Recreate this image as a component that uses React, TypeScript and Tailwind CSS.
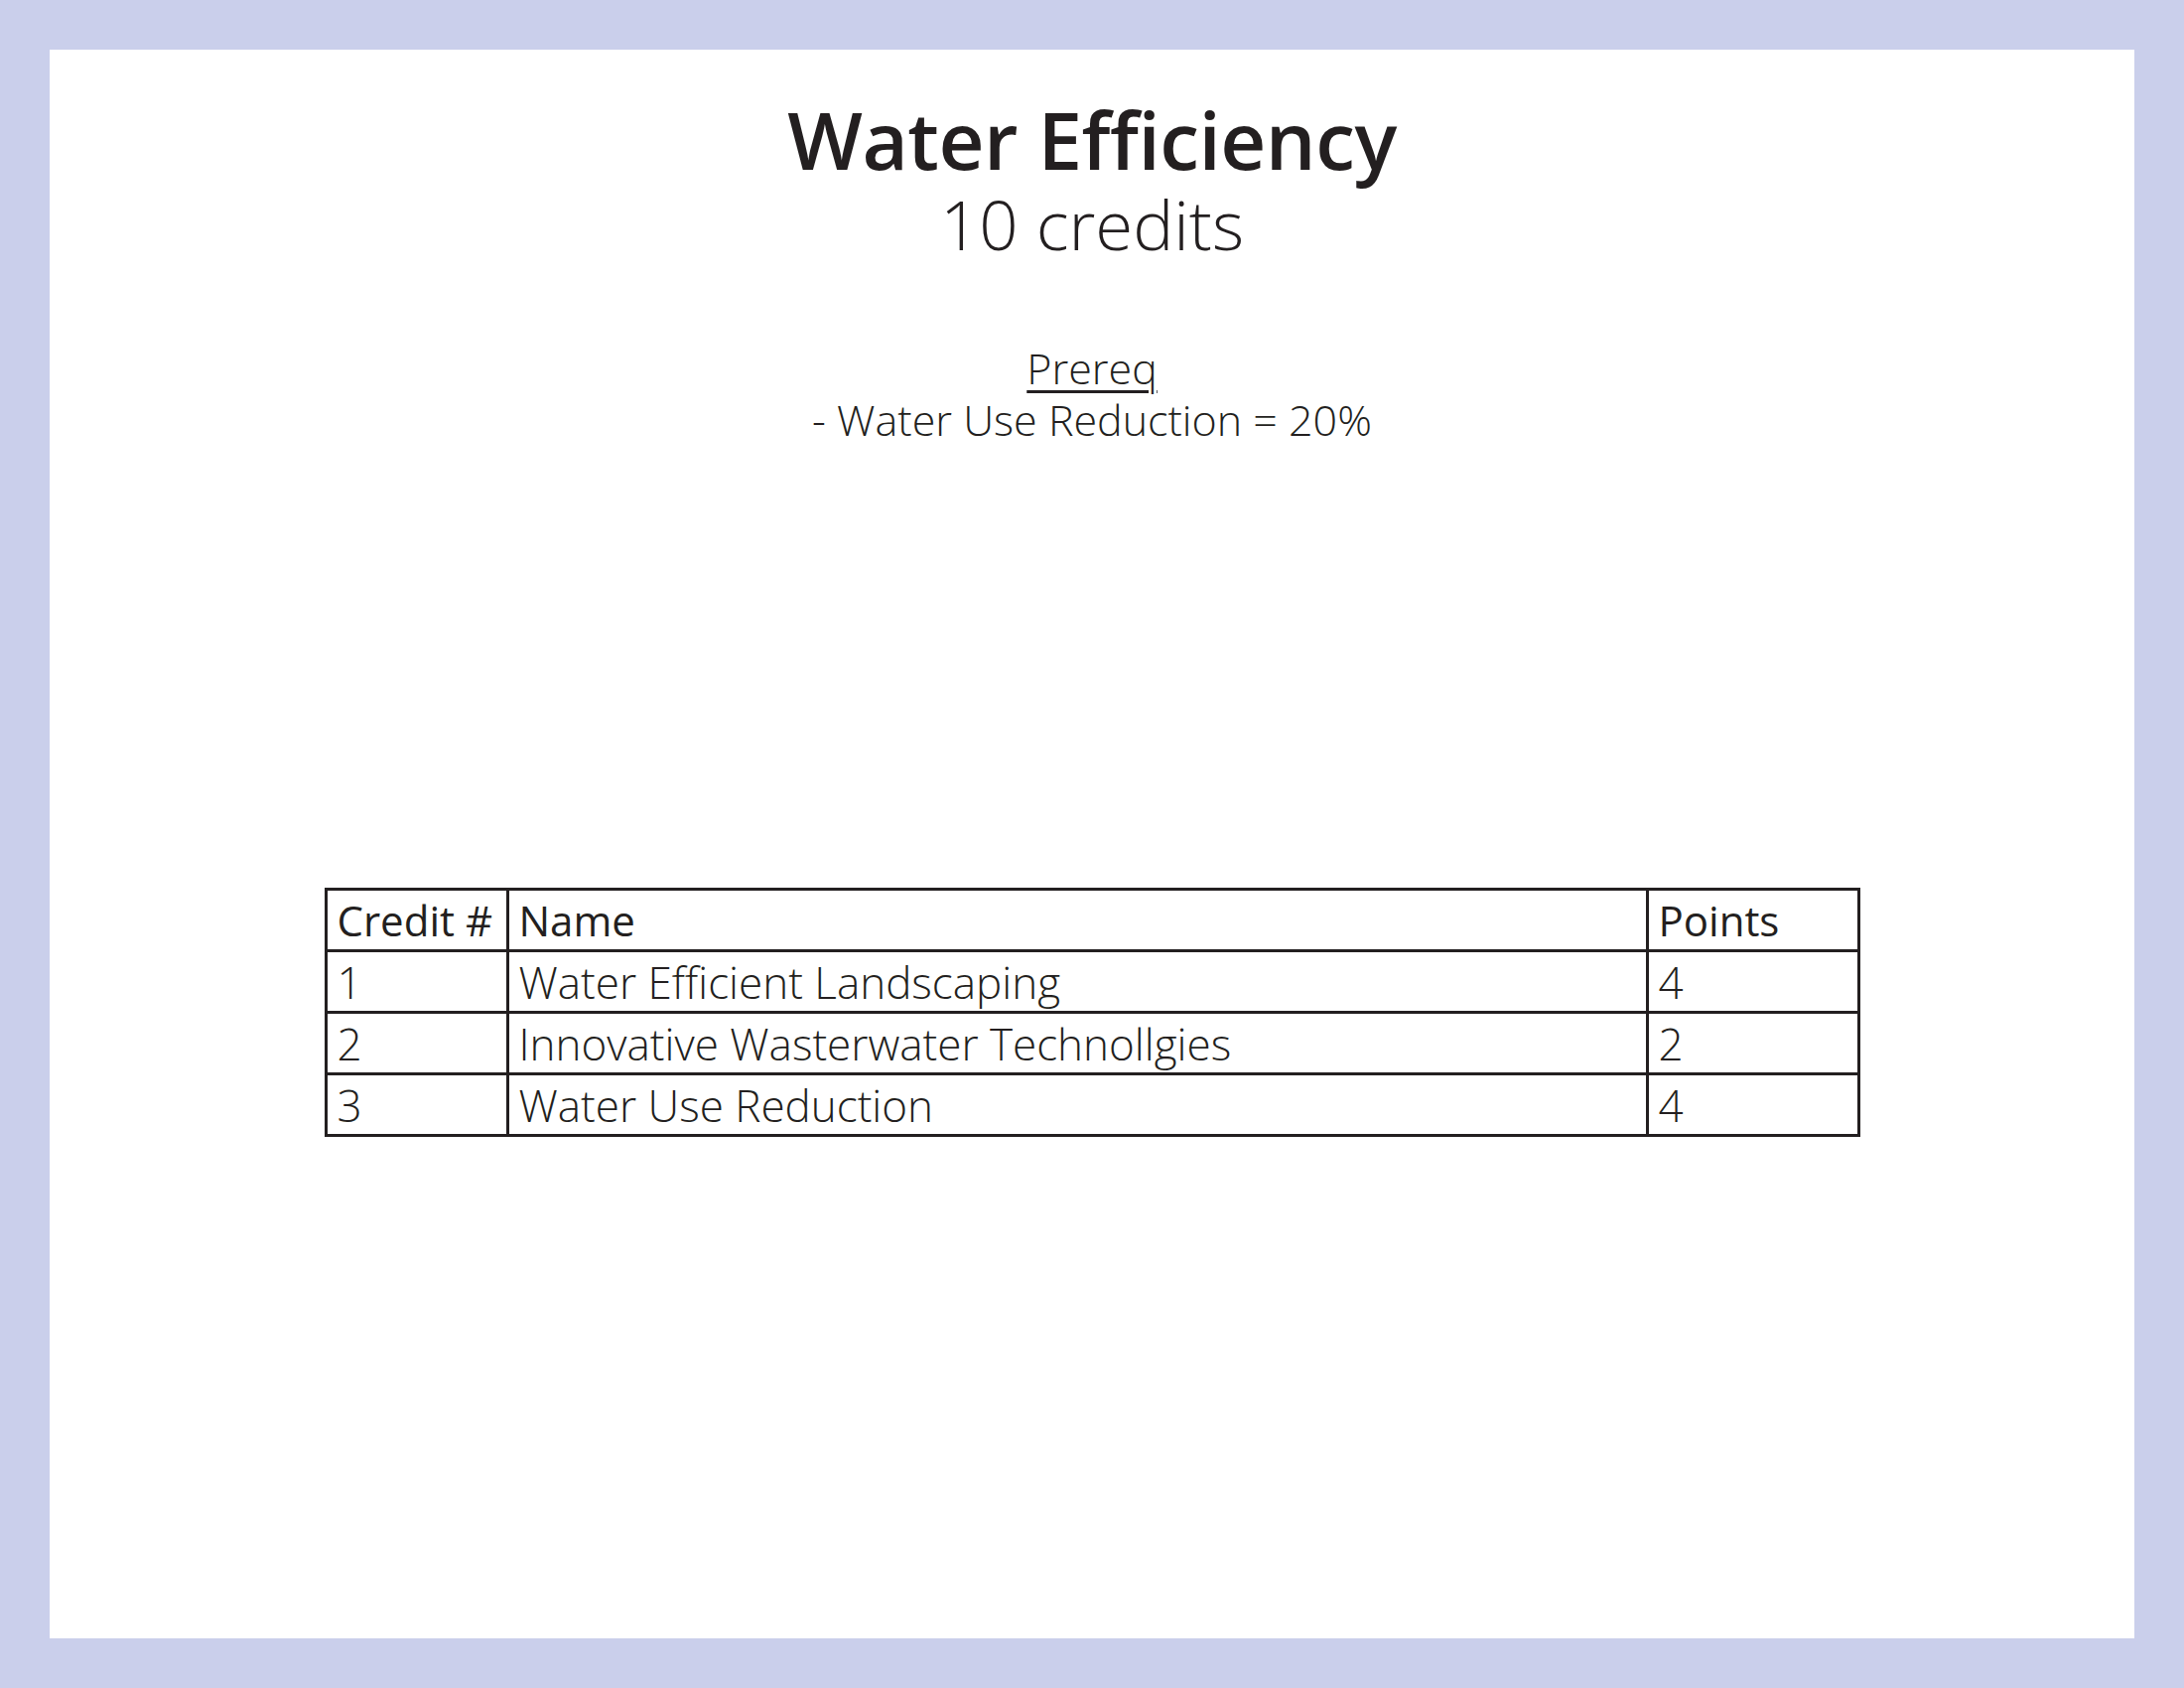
import React from "react";

const rows = [
  { id: "1", name: "Water Efficient Landscaping", points: "4" },
  { id: "2", name: "Innovative Wasterwater Technollgies", points: "2" },
  { id: "3", name: "Water Use Reduction", points: "4" },
];

const cell = "border-[3px] border-[#231f20] px-[10px] h-[62px] text-left align-middle leading-none";

export default function App() {
  return (
    <div className="min-h-screen bg-[#cacfeb] p-[50px]" style={{ fontFamily: '"Open Sans", "Liberation Sans", sans-serif' }}>
      <div className="w-[2100px] h-[1600px] bg-white flex flex-col items-center text-[#231f20]">
        {/* Heading */}
        <h1 className="mt-[46px] text-[80px] font-semibold leading-[88px] tracking-[-0.5px]">Water Efficiency</h1>
        <div className="text-[69px] font-light leading-[82px]">10 credits</div>

        {/* Prerequisite */}
        <div className="mt-[79px] flex flex-col items-center text-[43px] font-light leading-[52px]">
          <span className="underline underline-offset-[6px] decoration-[3px]">Prereq</span>
          <span>- Water Use Reduction = 20%</span>
        </div>

        {/* Credits table */}
        <table className="mt-[445px] w-[1547px] border-collapse text-[44px] font-light">
          <thead>
            <tr>
              <th className={`${cell} w-[183px] text-[42px] font-normal`}>Credit #</th>
              <th className={`${cell} text-[42px] font-normal`}>Name</th>
              <th className={`${cell} w-[213px] text-[42px] font-normal`}>Points</th>
            </tr>
          </thead>
          <tbody>
            {rows.map((r) => (
              <tr key={r.id}>
                <td className={cell}>{r.id}</td>
                <td className={cell}>{r.name}</td>
                <td className={cell}>{r.points}</td>
              </tr>
            ))}
          </tbody>
        </table>
      </div>
    </div>
  );
}
